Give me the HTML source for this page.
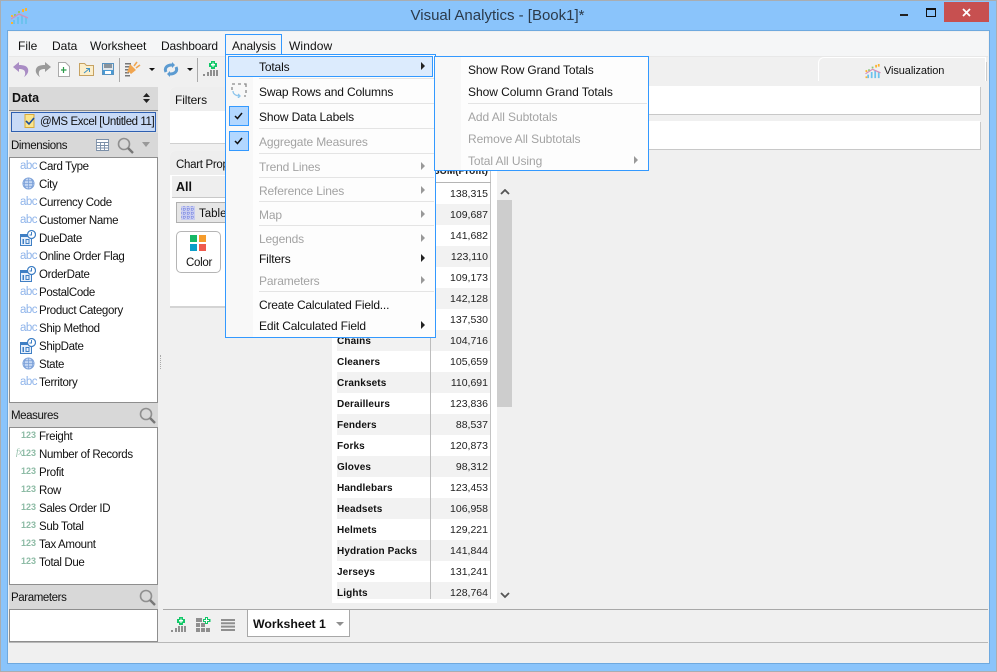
<!DOCTYPE html>
<html><head><meta charset="utf-8"><title>Visual Analytics</title>
<style>
html,body{margin:0;padding:0}
body{width:997px;height:672px;position:relative;overflow:hidden;background:#8ac4fb;font-family:"Liberation Sans",sans-serif;font-size:12px;color:#111}
div,span,svg{position:absolute;white-space:nowrap}
.t{height:16px;line-height:16px}
.l{font-size:11.5px;letter-spacing:-.35px;left:39px;line-height:18px}
.h{font-size:11.5px;letter-spacing:-.4px;left:11px;line-height:18px}
.mi{left:259px;letter-spacing:-.15px}
.sm{left:468px;letter-spacing:-.08px}
.d{color:#a3a3a3}
.sep{height:1px;background:#e4e4e4}
.arr{width:0;height:0;border-left:4px solid #222;border-top:4px solid transparent;border-bottom:4px solid transparent}
.arr.g{border-left-color:#999}
.abc{left:20px;width:17px;font-size:11.5px;color:#8fb4ea;height:14px;line-height:15px;letter-spacing:-.5px}
.num{left:21px;font-size:9px;font-weight:bold;color:#8dbba5;height:14px;line-height:15px;letter-spacing:0}
.hd{background:#d8d8d8}
.rw{left:337px;width:153px;height:21px}
.nm{left:337px;font-weight:bold;font-size:10px;letter-spacing:.12px;height:14px;line-height:14px;color:#111}
.vl{left:431px;width:57px;text-align:right;font-size:10.5px;height:14px;line-height:14px;color:#222}
</style></head><body>
<svg width="0" height="0" style="left:0;top:0"><defs>
<symbol id="date" viewBox="0 0 16 16"><rect x="0.5" y="4.5" width="11" height="11" fill="#e8f0fb" stroke="#3f7fc4"/><rect x="0" y="4" width="12" height="3" fill="#3f7fc4"/><rect x="2.5" y="9" width="1.5" height="5" fill="#3f7fc4"/><rect x="5.5" y="9" width="4" height="5" fill="#3f7fc4"/><rect x="6.5" y="10" width="2" height="3" fill="#e8f0fb"/><circle cx="11.5" cy="4.500" r="4" fill="#fff" stroke="#3f7fc4" stroke-width="1.2"/><path d="M11.500 2v3h-2" fill="none" stroke="#3f7fc4"/></symbol>
<symbol id="globe" viewBox="0 0 14 14"><circle cx="7" cy="7" r="6" fill="#c4d7f3" stroke="#7ba0d8"/><path d="M1 7h12M2 4h10M2 10h10M7 1v12M4 2c-2 3-2 7 0 10M10 2c2 3 2 7 0 10" fill="none" stroke="#7ba0d8" stroke-width=".8"/></symbol>
<symbol id="mag" viewBox="0 0 17 17"><circle cx="7" cy="7" r="5.500" fill="none" stroke="#8f8f8f" stroke-width="1.600"/><path d="M11 11l5 5" stroke="#777" stroke-width="2.400"/></symbol>
<symbol id="bars" viewBox="0 0 16 16"><path d="M0 13h2v2H0zM4 11h2v4H4zM7 9h2v6H7zM10 9h2v6h-2zM13 9h2v6h-2z" fill="#8f8f8f"/><path d="M8 0h4v2h2v4h-2v2H8V6H6V2h2z" fill="#12c868"/><path d="M9.500 1.500h1V3H12v1.500h-1.500V6h-1V4.500H8V3h1.500z" fill="#fff"/></symbol>
<symbol id="logo" viewBox="0 0 17 17"><path d="M2 12h2v4H2zM6 9h2v7H6zM10 7h2v9h-2zM14 9h2v7h-2z" fill="#6cc2ee"/><path d="M3 6h2v2H3zM7 3h2v2H7z" fill="#8cc878"/><path d="M0 14h2v2H0zM0 7h2v2H0zM11 1h2v3h-2zM14 0h2v3h-2z" fill="#fcb32e"/><path d="M0 11l8-5 9 4" fill="none" stroke="#d58fb8" stroke-width="1.300"/></symbol>
</defs></svg>

<!-- outer frame -->
<div style="left:0;top:0;width:995px;height:670px;border:1px solid #a9adb1"></div>
<svg style="left:11px;top:8px" width="17" height="17"><use href="#logo"/></svg>
<div style="left:-1px;top:7px;width:997px;text-align:center;font-size:15px;height:18px;line-height:18px;color:#2b3a4a">Visual Analytics - [Book1]*</div>
<div style="left:900px;top:14px;width:8px;height:2px;background:#222"></div>
<div style="left:926px;top:8px;width:8px;height:6px;border:1px solid #111;border-top-width:2px"></div>
<div style="left:944px;top:2px;width:45px;height:20px;background:#c75050"></div>
<svg style="left:962px;top:8px" width="10" height="9"><path d="M1 1l7 7M8 1l-7 7" stroke="#fff" stroke-width="1.800"/></svg>

<!-- client -->
<div style="left:8px;top:31px;width:981px;height:632px;background:#f0f0f0;box-shadow:0 0 0 1px #6ea9df"></div>
<div style="left:9px;top:32px;width:979px;height:24px;background:#f5f6f7"></div>
<div style="left:9px;top:56px;width:979px;height:1px;background:#e8e8e8"></div>
<div class="t" style="left:18px;top:38px">File</div>
<div class="t" style="left:52px;top:38px">Data</div>
<div class="t" style="left:90px;top:38px;letter-spacing:-.1px">Worksheet</div>
<div class="t" style="left:161px;top:38px;letter-spacing:-.2px">Dashboard</div>
<div class="t" style="left:289px;top:38px;letter-spacing:.1px">Window</div>

<!-- toolbar -->
<svg style="left:13px;top:62px" width="16" height="15"><path d="M6 0L0 5l6 5V7c4 0 7 1 6 6l-1 2c3-2 5-5 4-8-1-3-4-4-9-4z" fill="#a98cc4"/></svg>
<svg style="left:35px;top:62px" width="16" height="15"><path d="M10 0l6 5-6 5V7c-4 0-7 1-6 6l1 2c-3-2-5-5-4-8 1-3 4-4 9-4z" fill="#9a9a9a"/></svg>
<svg style="left:58px;top:62px" width="12" height="15"><path d="M.5.500h7l4 4v10H.5z" fill="#fff" stroke="#aaa"/><path d="M5.500 5v6M3 8h5.500" stroke="#2b9b4a" stroke-width="1.200"/></svg>
<svg style="left:79px;top:63px" width="15" height="13"><path d="M.5 12.500V.5h5l2 2h7v10z" fill="#fbeecb" stroke="#c6a262"/><path d="M5 10l5-4M7 5.500h3.500V9" fill="none" stroke="#3f92c4"/></svg>
<svg style="left:102px;top:63px" width="12" height="12"><rect x=".5" y=".5" width="11" height="11" fill="#dfe6ec" stroke="#5a93c0"/><path d="M2 1h8v4H2z" fill="#8a949c"/><path d="M1 7h10v4H1z" fill="#4a9ad4"/><path d="M3 8h6v3H3z" fill="#fff"/></svg>
<div style="left:119px;top:58px;width:1px;height:24px;background:#aaa"></div>
<svg style="left:124px;top:61px" width="17" height="17"><path d="M1 2h6v1.500H1zM1 5h5v1.500H1zM1 8h4v1.500H1zM1 11h4v1.500H1zM1 14h5v1.500H1z" fill="#777"/><path d="M6 3l6 6-5 4-2-2-2 1 1-3z" fill="#f0a550"/><path d="M10 5l3-4M12 7l4-3" stroke="#f0a550" stroke-width="1.600"/></svg>
<div style="left:149px;top:68px;border-top:3px solid #111;border-left:3px solid transparent;border-right:3px solid transparent"></div>
<svg style="left:163px;top:62px" width="16" height="15"><path d="M3 10C1 6 4 3 9 3M13 5c2 4-1 7-6 7" fill="none" stroke="#5c9bd1" stroke-width="3"/><path d="M9 0l3 3-3 3zM7 9l-3 3 3 3z" fill="#5c9bd1"/></svg>
<div style="left:187px;top:68px;border-top:3px solid #111;border-left:3px solid transparent;border-right:3px solid transparent"></div>
<div style="left:197px;top:58px;width:1px;height:24px;background:#aaa"></div>
<svg style="left:203px;top:61px" width="16" height="16"><use href="#bars"/></svg>

<!-- left panel -->
<div class="hd" style="left:9px;top:87px;width:149px;height:23px;background:#d9d9d9"></div>
<div class="t" style="left:12px;top:90px;font-weight:bold;font-size:12.5px">Data</div>
<svg style="left:143px;top:93px" width="7" height="10"><path d="M3.500 0L7 4H0zM3.500 10L0 6h7z" fill="#222"/></svg>
<div style="left:9px;top:110px;width:149px;height:23px;background:#e0e0e0;border-top:1px solid #8e8e8e;box-sizing:border-box"></div>
<div style="left:11px;top:112px;width:143px;height:18px;background:#c8daf6;border:1px solid #2e5fb0"></div>
<svg style="left:23px;top:114px" width="13" height="14"><path d="M2 .5h9v13H2z" fill="#fbe58c" stroke="#d7a93c"/><path d="M3 7l3 3 5-6" fill="none" stroke="#1d4f9a" stroke-width="1.600"/></svg>
<div class="t" style="left:40px;top:113px;font-size:11.5px;letter-spacing:-.42px;line-height:18px">@MS Excel [Untitled 11]</div>
<div class="hd" style="left:9px;top:133px;width:149px;height:24px"></div>
<div class="t h" style="top:137px">Dimensions</div>
<svg style="left:96px;top:139px" width="13" height="12"><path d="M.5.500h12v11H.5zM.5 3.500h12M.5 6.500h12M.5 9h12M4.500 3.500v8M8.500 3.500v8" fill="#fff" stroke="#7b8fa8" stroke-width=".9"/></svg>
<svg style="left:117px;top:137px" width="17" height="17"><use href="#mag"/></svg>
<div style="left:142px;top:142px;border-top:5px solid #999;border-left:4px solid transparent;border-right:4px solid transparent"></div>
<div style="left:9px;top:157px;width:147px;height:244px;background:#fff;border:1px solid #8e8e8e"></div>

<div class="abc" style="top:159px">abc</div><div class="t l" style="top:158px">Card Type</div>
<svg style="left:22px;top:177px" width="13" height="13"><use href="#globe"/></svg><div class="t l" style="top:176px">City</div>
<div class="abc" style="top:195px">abc</div><div class="t l" style="top:194px">Currency Code</div>
<div class="abc" style="top:213px">abc</div><div class="t l" style="top:212px">Customer Name</div>
<svg style="left:20px;top:230px" width="16" height="16"><use href="#date"/></svg><div class="t l" style="top:230px">DueDate</div>
<div class="abc" style="top:249px">abc</div><div class="t l" style="top:248px">Online Order Flag</div>
<svg style="left:20px;top:266px" width="16" height="16"><use href="#date"/></svg><div class="t l" style="top:266px">OrderDate</div>
<div class="abc" style="top:285px">abc</div><div class="t l" style="top:284px">PostalCode</div>
<div class="abc" style="top:303px">abc</div><div class="t l" style="top:302px">Product Category</div>
<div class="abc" style="top:321px">abc</div><div class="t l" style="top:320px">Ship Method</div>
<svg style="left:20px;top:338px" width="16" height="16"><use href="#date"/></svg><div class="t l" style="top:338px">ShipDate</div>
<svg style="left:22px;top:357px" width="13" height="13"><use href="#globe"/></svg><div class="t l" style="top:356px">State</div>
<div class="abc" style="top:375px">abc</div><div class="t l" style="top:374px">Territory</div>

<div class="hd" style="left:9px;top:403px;width:149px;height:24px"></div>
<div class="t h" style="top:407px">Measures</div>
<svg style="left:139px;top:407px" width="17" height="17"><use href="#mag"/></svg>
<div style="left:9px;top:427px;width:147px;height:156px;background:#fff;border:1px solid #8e8e8e"></div>
<div class="num" style="top:428px">123</div><div class="t l" style="top:428px">Freight</div>
<div style="left:16px;top:447px;font-family:'Liberation Serif',serif;font-style:italic;font-size:9px;color:#8dbba5;height:10px;line-height:10px">fx</div>
<div class="num" style="top:446px">123</div><div class="t l" style="top:446px">Number of Records</div>
<div class="num" style="top:464px">123</div><div class="t l" style="top:464px">Profit</div>
<div class="num" style="top:482px">123</div><div class="t l" style="top:482px">Row</div>
<div class="num" style="top:500px">123</div><div class="t l" style="top:500px">Sales Order ID</div>
<div class="num" style="top:518px">123</div><div class="t l" style="top:518px">Sub Total</div>
<div class="num" style="top:536px">123</div><div class="t l" style="top:536px">Tax Amount</div>
<div class="num" style="top:554px">123</div><div class="t l" style="top:554px">Total Due</div>

<div class="hd" style="left:9px;top:585px;width:149px;height:24px"></div>
<div class="t h" style="top:589px">Parameters</div>
<svg style="left:139px;top:589px" width="17" height="17"><use href="#mag"/></svg>
<div style="left:9px;top:609px;width:147px;height:31px;background:#fff;border:1px solid #8e8e8e"></div>

<!-- splitter dots -->
<div style="left:160px;top:355px;width:1px;height:14px;border-left:1px dotted #aaa"></div>

<!-- status -->
<div style="left:9px;top:642px;width:979px;height:1px;background:#b8b8b8"></div>

<!-- sheet tab strip -->
<div style="left:247px;top:609px;width:101px;height:27px;background:#fff;border:1px solid #a8a8a8;border-top:0"></div>
<div style="left:163px;top:609px;width:825px;height:1px;background:#a8a8a8"></div>
<svg style="left:171px;top:617px" width="16" height="16"><use href="#bars"/></svg>
<svg style="left:196px;top:617px" width="15" height="15"><path d="M0 1h6v4H0zM0 6h4v4H0zM5 6h4v4H5zM0 11h4v4H0zM5 11h4v4H5zM10 11h4v4h-4z" fill="#8f8f8f"/><path d="M9 0h3v2h2.500v3H12v2H9V5H7V2h2z" fill="#12c868"/><path d="M10 1h1v2h2v1h-2v2h-1V4H8V3h2z" fill="#fff"/></svg>
<svg style="left:221px;top:619px" width="14" height="12"><path d="M0 0h14v2H0zM0 3.300h14v2H0zM0 6.600h14v2H0zM0 10h14v2H0z" fill="#8f8f8f"/></svg>
<div class="t" style="left:253px;top:616px;font-weight:bold;font-size:12.3px">Worksheet 1</div>
<div style="left:336px;top:622px;border-top:4px solid #8f8f8f;border-left:4px solid transparent;border-right:4px solid transparent"></div>

<!-- top panels -->
<div style="left:420px;top:86px;width:560px;height:28px;background:#fff;box-shadow:1px 1px 0 #c8c8c8"></div>
<div style="left:420px;top:121px;width:560px;height:28px;background:#fff;box-shadow:1px 1px 0 #c8c8c8"></div>
<div style="left:818px;top:57px;width:168px;height:24px;background:#f0f0f0;border:1px solid #fff;border-bottom:0;border-radius:6px 0 0 0;box-sizing:border-box"></div>
<div style="left:986px;top:62px;width:1px;height:19px;background:#ccc"></div>
<svg style="left:865px;top:64px" width="16" height="15"><use href="#logo"/></svg>
<div class="t" style="left:884px;top:63px;font-size:11px;letter-spacing:-.1px">Visualization</div>

<!-- filters panel -->
<div style="left:170px;top:87px;width:100px;height:56px;background:#fff;border-radius:5px 0 0 0;box-shadow:0 1px 0 #d0d0d0"></div>
<div style="left:170px;top:87px;width:100px;height:24px;background:#eee;border-radius:5px 0 0 0"></div>
<div class="t" style="left:175px;top:92px;letter-spacing:-.1px">Filters</div>

<!-- chart props -->
<div style="left:170px;top:151px;width:100px;height:155px;background:#fff;border-radius:5px 0 0 0;box-shadow:0 2px 0 #d4d4d4"></div>
<div style="left:170px;top:151px;width:100px;height:24px;background:#eee;border-radius:5px 0 0 0"></div>
<div class="t" style="left:176px;top:156px;font-size:11.5px;letter-spacing:-.3px;line-height:18px">Chart Properties</div>
<div style="left:172px;top:176px;width:98px;height:21px;background:#eeeeee;border-bottom:1px solid #c8c8c8"></div>
<div class="t" style="left:176px;top:179px;font-weight:bold;font-size:12.5px">All</div>
<div style="left:176px;top:202px;width:80px;height:19px;background:#e6e6e6;border:1px solid #b0b0b0"></div>
<svg style="left:181px;top:206px" width="14" height="14"><rect width="14" height="14" fill="#c9cdf0"/><path d="M3 0v14M7 0v14M11 0v14M0 3h14M0 7h14M0 11h14" stroke="#6f80e0" stroke-dasharray="1 1"/></svg>
<div class="t" style="left:199px;top:205px;font-size:11.5px;line-height:18px">Table</div>
<div style="left:176px;top:231px;width:43px;height:40px;background:#fff;border:1px solid #b5b5b5;border-radius:5px"></div>
<div style="left:190px;top:235px;width:7px;height:7px;background:#16b866"></div>
<div style="left:199px;top:235px;width:7px;height:7px;background:#f59c2c"></div>
<div style="left:190px;top:244px;width:7px;height:7px;background:#0b9ec9"></div>
<div style="left:199px;top:244px;width:7px;height:7px;background:#ef5b4d"></div>
<div class="t" style="left:186px;top:254px;font-size:11.5px;letter-spacing:-.3px;line-height:18px">Color</div>

<!-- table -->
<div style="left:332px;top:160px;width:165px;height:443px;background:#fff"></div>
<div class="rw" style="top:204px;background:#f2f2f2"></div>
<div class="rw" style="top:246px;background:#f2f2f2"></div>
<div class="rw" style="top:288px;background:#f2f2f2"></div>
<div class="rw" style="top:330px;background:#f2f2f2"></div>
<div class="rw" style="top:372px;background:#f2f2f2"></div>
<div class="rw" style="top:414px;background:#f2f2f2"></div>
<div class="rw" style="top:456px;background:#f2f2f2"></div>
<div class="rw" style="top:498px;background:#f2f2f2"></div>
<div class="rw" style="top:540px;background:#f2f2f2"></div>
<div class="rw" style="top:582px;height:17px;background:#f2f2f2"></div>
<div style="left:430px;top:160px;width:1px;height:439px;background:#bdbdbd"></div>
<div style="left:490px;top:160px;width:1px;height:439px;background:#c4c4c4"></div>
<div style="left:337px;top:182px;width:154px;height:1px;background:#b5b5b5"></div>
<div class="vl" style="top:165px;font-weight:bold;font-size:10px">SUM(Profit)</div>
<div class="vl" style="top:187px">138,315</div>
<div class="vl" style="top:208px">109,687</div>
<div class="vl" style="top:229px">141,682</div>
<div class="vl" style="top:250px">123,110</div>
<div class="vl" style="top:271px">109,173</div>
<div class="vl" style="top:292px">142,128</div>
<div class="vl" style="top:313px">137,530</div>
<div class="nm" style="top:335px">Chains</div><div class="vl" style="top:334px">104,716</div>
<div class="nm" style="top:356px">Cleaners</div><div class="vl" style="top:355px">105,659</div>
<div class="nm" style="top:377px">Cranksets</div><div class="vl" style="top:376px">110,691</div>
<div class="nm" style="top:398px">Derailleurs</div><div class="vl" style="top:397px">123,836</div>
<div class="nm" style="top:419px">Fenders</div><div class="vl" style="top:418px">88,537</div>
<div class="nm" style="top:440px">Forks</div><div class="vl" style="top:439px">120,873</div>
<div class="nm" style="top:461px">Gloves</div><div class="vl" style="top:460px">98,312</div>
<div class="nm" style="top:482px">Handlebars</div><div class="vl" style="top:481px">123,453</div>
<div class="nm" style="top:503px">Headsets</div><div class="vl" style="top:502px">106,958</div>
<div class="nm" style="top:524px">Helmets</div><div class="vl" style="top:523px">129,221</div>
<div class="nm" style="top:545px">Hydration Packs</div><div class="vl" style="top:544px">141,844</div>
<div class="nm" style="top:566px">Jerseys</div><div class="vl" style="top:565px">131,241</div>
<div class="nm" style="top:587px">Lights</div><div class="vl" style="top:586px">128,764</div>
<!-- scrollbar -->
<div style="left:497px;top:200px;width:15px;height:207px;background:#cdcdcd"></div>
<svg style="left:500px;top:189px" width="10" height="7"><path d="M1 5l4-4 4 4" fill="none" stroke="#555" stroke-width="1.800"/></svg>
<svg style="left:500px;top:592px" width="10" height="7"><path d="M1 1l4 4 4-4" fill="none" stroke="#555" stroke-width="1.800"/></svg>

<!-- Analysis menu button -->
<div style="left:225px;top:34px;width:55px;height:20px;background:#f5f6f7;border:1px solid #3399ff;border-bottom:0"></div>
<div class="t" style="left:232px;top:38px;letter-spacing:-.1px">Analysis</div>

<!-- main dropdown -->
<div style="left:225px;top:54px;width:209px;height:282px;background:#fdfdfd;border:1px solid #3399ff"></div>
<div style="left:226px;top:55px;width:27px;height:282px;background:#f8f8f8"></div>
<div style="left:228px;top:56px;width:203px;height:19px;background:#dcebfd;border:1px solid #3399ff"></div>
<div class="t mi" style="top:59px">Totals</div>
<div class="arr" style="left:421px;top:62px"></div>
<div class="sep" style="left:259px;top:78px;width:175px"></div>
<svg style="left:231px;top:83px" width="16" height="15"><path d="M1 1h3M7 1h3M13 1h2v3M15 7v3M15 13h-2M1 4v3" fill="none" stroke="#8a8a8a" stroke-width="1.300"/><path d="M2 8c0 3 3 5 7 5M7 11l2 2-2 2" fill="none" stroke="#8cc4ec" stroke-width="1.300"/></svg>
<div class="t mi" style="top:84px">Swap Rows and Columns</div>
<div class="sep" style="left:259px;top:103px;width:175px"></div>
<div style="left:229px;top:106px;width:18px;height:18px;background:#b2d7ff;border:1px solid #3399ff"></div>
<svg style="left:234px;top:112px" width="10" height="8"><path d="M1 4l2.500 2.500L8 1" fill="none" stroke="#111" stroke-width="1.500"/></svg>
<div class="t mi" style="top:109px">Show Data Labels</div>
<div class="sep" style="left:259px;top:128px;width:175px"></div>
<div style="left:229px;top:131px;width:18px;height:18px;background:#b2d7ff;border:1px solid #3399ff"></div>
<svg style="left:234px;top:137px" width="10" height="8"><path d="M1 4l2.500 2.500L8 1" fill="none" stroke="#111" stroke-width="1.500"/></svg>
<div class="t mi d" style="top:134px">Aggregate Measures</div>
<div class="sep" style="left:259px;top:153px;width:175px"></div>
<div class="t mi d" style="top:159px">Trend Lines</div><div class="arr g" style="left:421px;top:162px"></div>
<div class="sep" style="left:259px;top:177px;width:175px"></div>
<div class="t mi d" style="top:183px">Reference Lines</div><div class="arr g" style="left:421px;top:186px"></div>
<div class="sep" style="left:259px;top:201px;width:175px"></div>
<div class="t mi d" style="top:207px">Map</div><div class="arr g" style="left:421px;top:210px"></div>
<div class="sep" style="left:259px;top:225px;width:175px"></div>
<div class="t mi d" style="top:231px">Legends</div><div class="arr g" style="left:421px;top:234px"></div>
<div class="t mi" style="top:251px">Filters</div><div class="arr" style="left:421px;top:254px"></div>
<div class="t mi d" style="top:273px">Parameters</div><div class="arr g" style="left:421px;top:276px"></div>
<div class="sep" style="left:259px;top:291px;width:175px"></div>
<div class="t mi" style="top:297px;letter-spacing:-.2px">Create Calculated Field...</div>
<div class="t mi" style="top:318px">Edit Calculated Field</div><div class="arr" style="left:421px;top:321px"></div>

<!-- submenu -->
<div style="left:434px;top:56px;width:213px;height:113px;background:#fdfdfd;border:1px solid #3399ff"></div>
<div style="left:435px;top:57px;width:26px;height:113px;background:#f8f8f8"></div>
<div class="t sm" style="top:62px;letter-spacing:-.14px">Show Row Grand Totals</div>
<div class="t sm" style="top:84px;letter-spacing:-.04px">Show Column Grand Totals</div>
<div class="sep" style="left:468px;top:103px;width:179px"></div>
<div class="t sm d" style="top:109px">Add All Subtotals</div>
<div class="t sm d" style="top:131px">Remove All Subtotals</div>
<div class="t sm d" style="top:153px">Total All Using</div>
<div class="arr g" style="left:634px;top:156px"></div>
</body></html>
